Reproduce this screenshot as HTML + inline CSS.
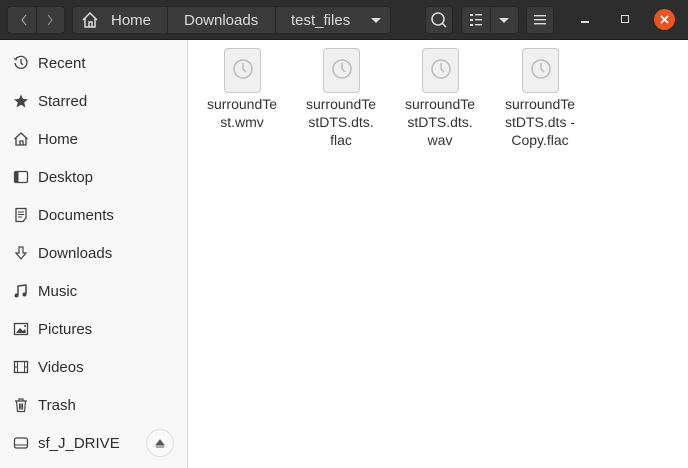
<!DOCTYPE html>
<html><head><style>
*{margin:0;padding:0;box-sizing:border-box}
body{width:688px;height:468px;overflow:hidden;font-family:"Liberation Sans",sans-serif;background:#fff;position:relative}
.hdr{position:absolute;left:0;top:0;width:688px;height:40px;background:#2d2d2d;border-bottom:1px solid #1e1e1e}
.btn{position:absolute;top:6px;height:28px;background:#3a3a3a;border:1px solid #262626;border-radius:4px;color:#ddd}
.sb{position:absolute;left:0;top:40px;width:188px;height:428px;background:#f7f8f7;border-right:1px solid #d8d8d8}
.it{position:absolute;left:38px;font-size:15px;color:#2e2e2e}
.ic{position:absolute;left:13px;width:16px;height:16px}
.f{position:absolute;top:48px;width:100px;text-align:center;font-size:14px;line-height:18px;color:#333}
.doc{width:37px;height:45px;margin:0 auto 2px;border:1px solid #c8c8c8;border-radius:4px;background:#f0f0f0;position:relative}
.doc svg{position:absolute;left:7px;top:9px}
</style></head><body>
<div class="hdr">
 <div class="btn" style="left:7px;width:58px"><div style="position:absolute;left:28px;top:0;width:1px;height:26px;background:#262626"></div>
  <svg width="58" height="26" style="position:absolute;left:0;top:0"><path d="M18 8 L14 13 L18 18" stroke="#bbb" fill="none"/><path d="M40 8 L44 13 L40 18" stroke="#999" fill="none"/></svg></div>
 <div class="btn" style="left:72px;width:319px;font-size:15px">
  <svg width="18" height="18" style="position:absolute;left:8px;top:4px"><path d="M2 9 L9 2 L16 9 M4 7 V16 H14 V7 M8 16 V11 H11 V16" stroke="#ddd" stroke-width="1.5" fill="none"/></svg>
  <span style="position:absolute;left:38px;top:5px">Home</span>
  <div style="position:absolute;left:94px;top:0;width:1px;height:26px;background:#262626"></div>
  <span style="position:absolute;left:111px;top:5px">Downloads</span>
  <div style="position:absolute;left:202px;top:0;width:1px;height:26px;background:#262626"></div>
  <span style="position:absolute;left:218px;top:5px">test_files</span>
  <svg width="12" height="8" style="position:absolute;left:297px;top:10px"><path d="M1 1 H11 L6 6Z" fill="#ddd"/></svg>
 </div>
 <div class="btn" style="left:425px;width:28px"><svg width="26" height="26"><circle cx="12" cy="12" r="6" stroke="#ddd" stroke-width="1.5" fill="none"/><path d="M16 16 L20 20" stroke="#ddd" stroke-width="1.5"/></svg></div>
 <div class="btn" style="left:461px;width:58px"><div style="position:absolute;left:28px;top:0;width:1px;height:26px;background:#262626"></div>
  <svg width="58" height="26"><g fill="#ddd"><rect x="8" y="7" width="3" height="2"/><rect x="8" y="12" width="3" height="2"/><rect x="8" y="17" width="3" height="2"/><rect x="13" y="7" width="7" height="1.4"/><rect x="13" y="12" width="7" height="1.4"/><rect x="13" y="17" width="7" height="1.4"/><path d="M37 11 H47 L42 16Z"/></g></svg></div>
 <div class="btn" style="left:526px;width:28px"><svg width="26" height="26"><g fill="#ddd"><rect x="7" y="8" width="12" height="1.4"/><rect x="7" y="12" width="12" height="1.4"/><rect x="7" y="16" width="12" height="1.4"/></g></svg></div>
 <div style="position:absolute;left:581px;top:21px;width:8px;height:1.5px;background:#ddd"></div>
 <div style="position:absolute;left:621px;top:15px;width:8px;height:8px;border:1.3px solid #ddd"></div>
 <div style="position:absolute;left:654px;top:9px;width:21px;height:21px;border-radius:50%;background:#e95420"><svg width="21" height="21"><path d="M7 7 L14 14 M14 7 L7 14" stroke="#fff" stroke-width="1.8"/></svg></div>
</div>
<div class="sb">
 <svg class="ic" style="top:15px" viewBox="0 0 16 16"><path d="M3 4 A6 6 0 1 1 2 8" stroke="#444" stroke-width="1.3" fill="none"/><path d="M8 4 V8 L10 10" stroke="#444" stroke-width="1.3" fill="none"/><path d="M1 3 L3 5 L4 2" stroke="#444" fill="none"/></svg><div class="it" style="top:15px">Recent</div>
 <svg class="ic" style="top:53px" viewBox="0 0 16 16"><path d="M8 1.5 L10 6 L15 6.3 L11.2 9.5 L12.4 14.5 L8 11.8 L3.6 14.5 L4.8 9.5 L1 6.3 L6 6Z" fill="#444"/></svg><div class="it" style="top:53px">Starred</div>
 <svg class="ic" style="top:91px" viewBox="0 0 16 16"><path d="M1.5 8 L8 2 L14.5 8 M3 7 V14 H13 V7 M7 14 V10 H10 V14" stroke="#444" stroke-width="1.3" fill="none"/></svg><div class="it" style="top:91px">Home</div>
 <svg class="ic" style="top:129px" viewBox="0 0 16 16"><rect x="1.5" y="2.5" width="13" height="11" rx="1.5" stroke="#444" stroke-width="1.3" fill="none"/><rect x="1.5" y="2.5" width="4" height="11" fill="#444"/></svg><div class="it" style="top:129px">Desktop</div>
 <svg class="ic" style="top:167px" viewBox="0 0 16 16"><path d="M3 1.5 H13 V11 L10 14.5 H3Z" stroke="#444" stroke-width="1.3" fill="none"/><path d="M5 5 H11 M5 7.5 H11 M5 10 H9" stroke="#444"/></svg><div class="it" style="top:167px">Documents</div>
 <svg class="ic" style="top:205px" viewBox="0 0 16 16"><path d="M6 2 H10 V8 H13 L8 14 L3 8 H6Z" stroke="#444" stroke-width="1.2" fill="none"/></svg><div class="it" style="top:205px">Downloads</div>
 <svg class="ic" style="top:243px" viewBox="0 0 16 16"><path d="M5 12 V3 L13 2 V11" stroke="#444" stroke-width="1.5" fill="none"/><circle cx="3.5" cy="12.5" r="2" fill="#444"/><circle cx="11.5" cy="11.5" r="2" fill="#444"/></svg><div class="it" style="top:243px">Music</div>
 <svg class="ic" style="top:281px" viewBox="0 0 16 16"><rect x="1.5" y="2.5" width="13" height="11" stroke="#444" stroke-width="1.3" fill="none"/><path d="M3 12 L7 7 L10 10 L12 8 L13 12Z" fill="#444"/><circle cx="12" cy="5" r="1" fill="#444"/></svg><div class="it" style="top:281px">Pictures</div>
 <svg class="ic" style="top:319px" viewBox="0 0 16 16"><rect x="1.5" y="2.5" width="13" height="11" stroke="#444" stroke-width="1.3" fill="none"/><path d="M4.5 2.5 V13.5 M11.5 2.5 V13.5 M1.5 8 H4.5 M11.5 8 H14.5" stroke="#444"/></svg><div class="it" style="top:319px">Videos</div>
 <svg class="ic" style="top:357px" viewBox="0 0 16 16"><path d="M2 4 H14 M6 4 V2 H10 V4 M3.5 4 L4.5 14.5 H11.5 L12.5 4 M6.5 6.5 V12.5 M8 6.5 V12.5 M9.5 6.5 V12.5" stroke="#444" stroke-width="1.2" fill="none"/></svg><div class="it" style="top:357px">Trash</div>
 <svg class="ic" style="top:395px" viewBox="0 0 16 16"><rect x="1.5" y="3" width="13" height="10" rx="2" stroke="#444" stroke-width="1.3" fill="none"/><path d="M1.5 10 H14.5" stroke="#444"/></svg><div class="it" style="top:395px">sf_J_DRIVE</div>
 <div style="position:absolute;left:146px;top:389px;width:28px;height:28px;border-radius:50%;border:1px solid #ddd;background:#fafafa"><svg width="26" height="26"><path d="M9 15 L13 10 L17 15Z M9 17 H17" stroke="#555" fill="#555"/></svg></div>
</div>
<div class="f" style="left:192px"><div class="doc"><svg width="22" height="22"><circle cx="11" cy="11" r="9" stroke="#bbb" stroke-width="1.5" fill="none"/><path d="M11 5 V11 L14 14" stroke="#bbb" stroke-width="1.5" fill="none"/></svg></div>surroundTe<br>st.wmv</div>
<div class="f" style="left:291px"><div class="doc"><svg width="22" height="22"><circle cx="11" cy="11" r="9" stroke="#bbb" stroke-width="1.5" fill="none"/><path d="M11 5 V11 L14 14" stroke="#bbb" stroke-width="1.5" fill="none"/></svg></div>surroundTe<br>stDTS.dts.<br>flac</div>
<div class="f" style="left:390px"><div class="doc"><svg width="22" height="22"><circle cx="11" cy="11" r="9" stroke="#bbb" stroke-width="1.5" fill="none"/><path d="M11 5 V11 L14 14" stroke="#bbb" stroke-width="1.5" fill="none"/></svg></div>surroundTe<br>stDTS.dts.<br>wav</div>
<div class="f" style="left:490px"><div class="doc"><svg width="22" height="22"><circle cx="11" cy="11" r="9" stroke="#bbb" stroke-width="1.5" fill="none"/><path d="M11 5 V11 L14 14" stroke="#bbb" stroke-width="1.5" fill="none"/></svg></div>surroundTe<br>stDTS.dts -<br>Copy.flac</div>
</body></html>
